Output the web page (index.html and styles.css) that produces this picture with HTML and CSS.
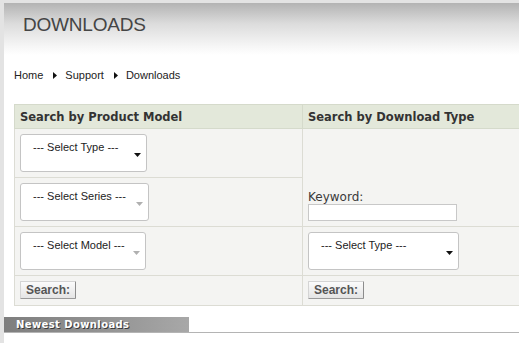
FILE: index.html
```html
<!DOCTYPE html>
<html>
<head>
<meta charset="utf-8">
<title>Downloads</title>
<link rel="stylesheet" href="styles.css">
</head>
<body>
<div class="page">
  <div class="hero"><h1 class="title">DOWNLOADS</h1></div>
  <nav class="crumbs">
    <a class="crumb" href="#">Home</a>
    <svg class="sep" width="4" height="7" viewBox="0 0 4 7"><path d="M0 0 L4 3.5 L0 7 Z" fill="#111"/></svg>
    <a class="crumb" href="#">Support</a>
    <svg class="sep" width="4" height="7" viewBox="0 0 4 7"><path d="M0 0 L4 3.5 L0 7 Z" fill="#111"/></svg>
    <span class="crumb">Downloads</span>
  </nav>
  <table class="search">
    <tr>
      <th class="col-left">Search by Product Model</th>
      <th class="col-right">Search by Download Type</th>
    </tr>
    <tr>
      <td>
        <div class="sel w-type">
          <span class="sel-text">--- Select Type ---</span>
          <svg class="sel-arrow" width="7" height="4" viewBox="0 0 7 4"><path d="M0 0 H7 L3.5 4 Z" fill="#111"/></svg>
        </div>
      </td>
      <td rowspan="2" class="kw-cell">
        <label class="kw-label">Keyword:</label>
        <input class="kw-input" type="text">
      </td>
    </tr>
    <tr>
      <td>
        <div class="sel w-series">
          <span class="sel-text">--- Select Series ---</span>
          <svg class="sel-arrow" width="7" height="4" viewBox="0 0 7 4"><path d="M0 0 H7 L3.5 4 Z" fill="#b0b0b0"/></svg>
        </div>
      </td>
    </tr>
    <tr>
      <td>
        <div class="sel w-model">
          <span class="sel-text">--- Select Model ---</span>
          <svg class="sel-arrow" width="7" height="4" viewBox="0 0 7 4"><path d="M0 0 H7 L3.5 4 Z" fill="#b0b0b0"/></svg>
        </div>
      </td>
      <td>
        <div class="sel w-dtype">
          <span class="sel-text">--- Select Type ---</span>
          <svg class="sel-arrow" width="7" height="4" viewBox="0 0 7 4"><path d="M0 0 H7 L3.5 4 Z" fill="#111"/></svg>
        </div>
      </td>
    </tr>
    <tr>
      <td class="btn-cell"><button class="btn" type="button">Search:</button></td>
      <td class="btn-cell"><button class="btn" type="button">Search:</button></td>
    </tr>
  </table>
  <div class="section">
    <h2 class="section-bar">Newest Downloads</h2>
  </div>
</div>
</body>
</html>
```
FILE: styles.css
```css
html, body {
  margin: 0;
  padding: 0;
  overflow: hidden;
  background: #e3e3e3;
}
body {
  font-family: "Liberation Sans", Arial, sans-serif;
  color: #222;
}
.page {
  margin: 3px 0 0 4px;
  background: #fff;
  min-height: 400px;
}
.hero {
  height: 52px;
  box-sizing: border-box;
  padding: 11px 0 0 19px;
  background: linear-gradient(to bottom, #b3b3b3 0%, #dcdcdc 40%, #f7f7f7 85%, #ffffff 100%);
}
.title {
  margin: 0;
  font-weight: normal;
  font-size: 19px;
  line-height: 22px;
  color: #454545;
  letter-spacing: -0.2px;
}
.crumbs {
  display: flex;
  align-items: center;
  margin: 13px 0 0 10px;
  height: 14px;
  font-size: 11px;
  line-height: 14px;
}
.crumb {
  color: #222;
  text-decoration: none;
}
.sep {
  display: block;
  margin: 0 8px 0 10px;
}
.search {
  border-collapse: collapse;
  margin: 22px 0 0 10px;
  width: 600px;
  font-family: "DejaVu Sans", Verdana, sans-serif;
}
.search th {
  background: #e3e8da;
  border: 1px solid #d5dacb;
  text-align: left;
  font-size: 11.5px;
  font-weight: bold;
  color: #333;
  height: 24px;
  padding: 0 5px;
  box-sizing: border-box;
}
.col-left {
  width: 288px;
}
.search td {
  background: #f4f4f2;
  border: 1px solid #dcdcd4;
  padding: 5px 5px;
  vertical-align: top;
}
.sel {
  display: flex;
  justify-content: space-between;
  height: 38px;
  box-sizing: border-box;
  background: #fff;
  border: 1px solid #c4c4c4;
  border-radius: 3px;
  font-family: "Liberation Sans", Arial, sans-serif;
  font-size: 11px;
  color: #222;
}
.w-type { width: 127px; }
.w-series { width: 129px; }
.w-model { width: 126px; }
.w-dtype { width: 151px; }
.sel-text {
  padding: 5px 0 0 12px;
  line-height: 14px;
}
.sel-arrow {
  align-self: center;
  margin: 4px 5px 0 0;
}
.kw-cell {
  vertical-align: bottom !important;
}
.kw-label {
  display: block;
  font-size: 12px;
  line-height: 14px;
  color: #3a3a3a;
}
.kw-input {
  display: block;
  margin: 0;
  width: 149px;
  height: 17px;
  box-sizing: border-box;
  border: 1px solid #c8c8c8;
  background: #fff;
  padding: 0 2px;
}
.btn-cell {
  height: 18px;
}
.btn {
  display: block;
  width: 56px;
  height: 18px;
  margin: 0 0 1px 0;
  padding: 0;
  box-sizing: border-box;
  font-family: "Liberation Sans", Arial, sans-serif;
  font-size: 12px;
  font-weight: bold;
  color: #555;
  background: linear-gradient(to bottom, #fbfbfb, #e4e4e4);
  border: 1px solid #d4d4d4;
  border-right-color: #8c8c8c;
  border-bottom-color: #9a9a9a;
  border-radius: 1px;
}
.section {
  margin-top: 11px;
  border-bottom: 1px solid #b4b4b4;
}
.section-bar {
  margin: 0;
  width: 185px;
  height: 15px;
  box-sizing: border-box;
  padding-left: 12px;
  background: linear-gradient(to right, #7e7e7e 0%, #9a9a9a 70%, #a8a8a8 100%);
  font-family: "DejaVu Sans", Verdana, sans-serif;
  font-size: 10px;
  line-height: 15px;
  letter-spacing: 0.4px;
  font-weight: bold;
  color: #fff;
  text-shadow: 1px 1px 0 #3a3a3a;
}
```
